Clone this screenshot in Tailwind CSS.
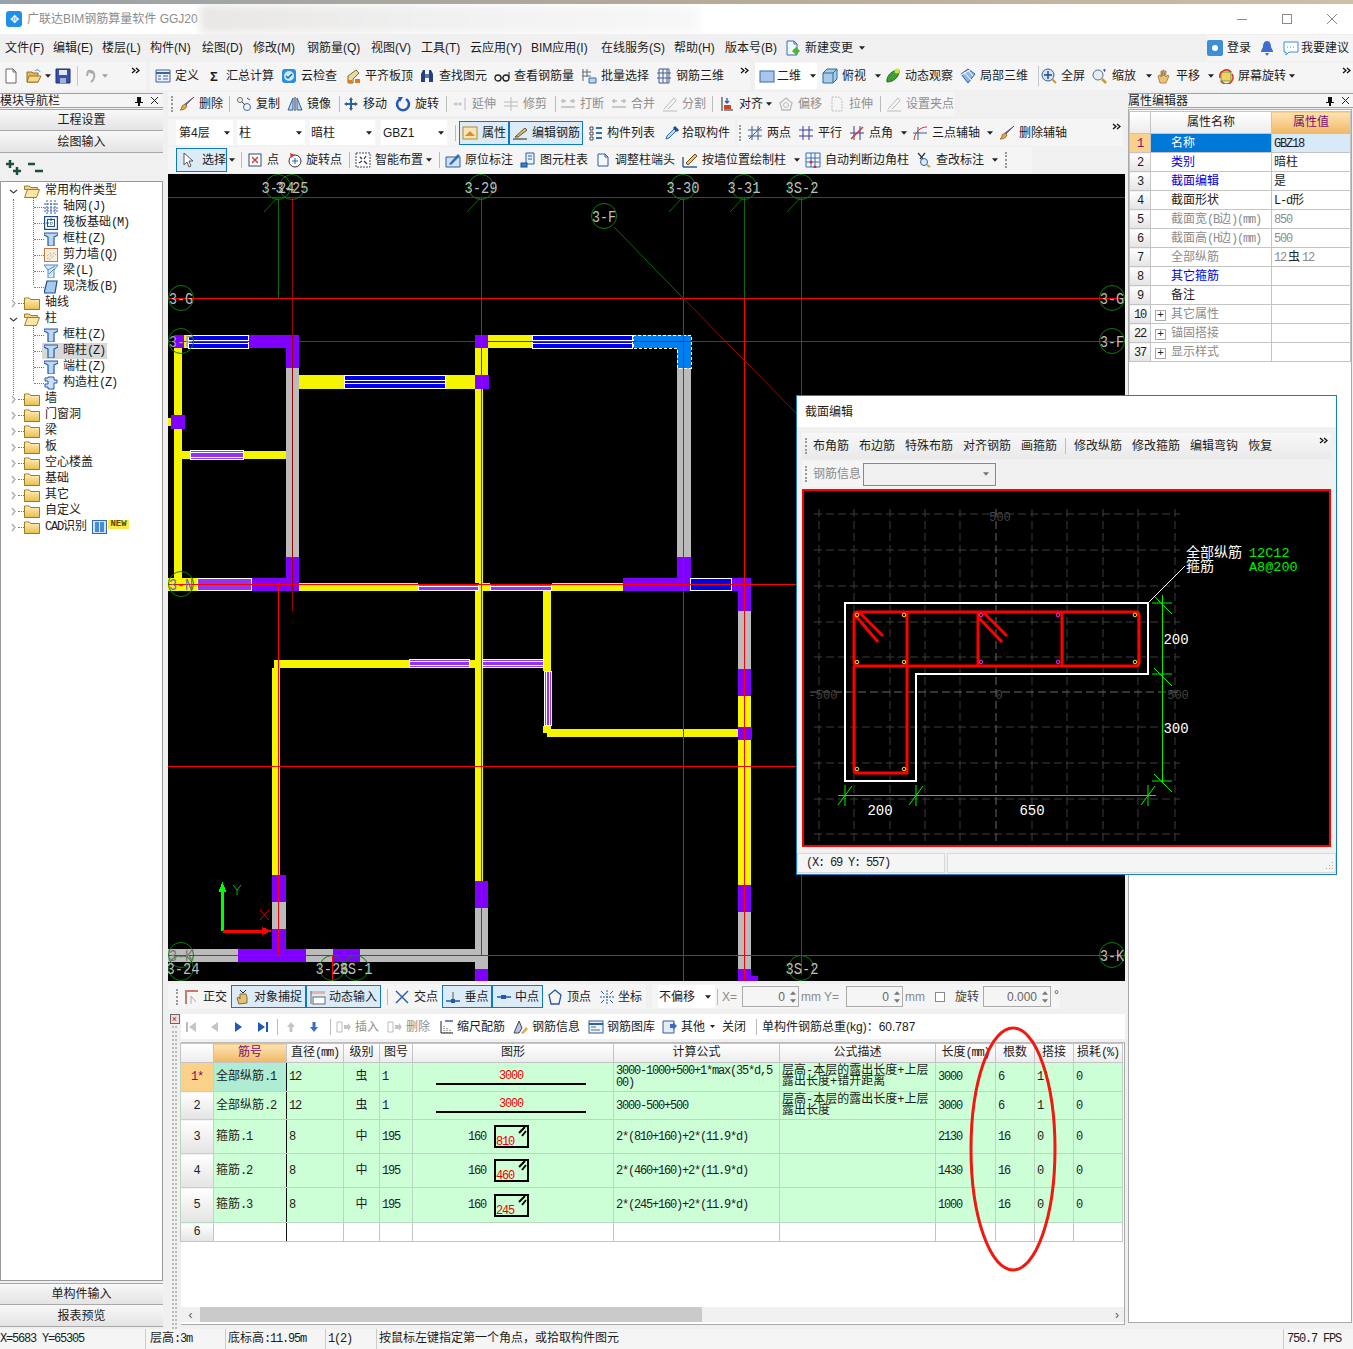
<!DOCTYPE html>
<html lang="zh-CN">
<head>
  <meta charset="UTF-8">
  <title>广联达BIM钢筋算量软件</title>
  <script src="https://cdn.jsdelivr.net/npm/@tailwindcss/browser@4"></script>
</head>
<body class="font-['Liberation_Sans','Noto_Sans_CJK_SC',sans-serif] text-xs leading-none text-[#1c1c1c] bg-[#f0f0f0] whitespace-nowrap">

<!-- shared icons -->
<svg class="absolute w-0 h-0">
  <symbol id="tri" viewBox="0 0 7 4"><path d="M0 0h7L3.500 4z" fill="#222"/></symbol>
  <symbol id="more" viewBox="0 0 9 7"><path d="M1 1l3 2.500L1 6M5 1l3 2.500L5 6" fill="none" stroke="#111" stroke-width="1.300"/></symbol>
  <symbol id="doc" viewBox="0 0 16 16"><path d="M3 1h7l3 3v11H3z" fill="#fff" stroke="#666"/><path d="M10 1v3h3" fill="none" stroke="#666"/></symbol>
  <symbol id="open" viewBox="0 0 16 16"><path d="M1 4h5l1 1h5v9H1z" fill="#e3b85c" stroke="#9a7423"/><path d="M3 8h12l-3 6H1z" fill="#f6d98c" stroke="#9a7423"/><path d="M9 3c2-2 4-1 5 1" fill="none" stroke="#3a7dc4"/></symbol>
  <symbol id="save" viewBox="0 0 16 16"><path d="M1 1h14v14H1z" fill="#3a4fa8" stroke="#1f2f73"/><path d="M4 2h8v5H4z" fill="#dfe6f5"/><path d="M5 10h6v5H5z" fill="#9fb0dc"/></symbol>
  <symbol id="undo" viewBox="0 0 16 16"><path d="M5 3c6-2 9 6 3 11M5 3l-1 5M5 3l5 2" fill="none" stroke="#aaa" stroke-width="2"/></symbol>
  <symbol id="def" viewBox="0 0 16 16"><path d="M1 2h14v12H1z" fill="#e9eff8" stroke="#40639a"/><path d="M1 5h14" stroke="#40639a" stroke-width="2"/><path d="M8 8h5M8 11h5M3 8h3M3 11h3" stroke="#40639a"/></symbol>
  <symbol id="cloud" viewBox="0 0 16 16"><rect x="1" y="1" width="14" height="14" rx="3" fill="#2b8fe0"/><circle cx="8" cy="8" r="5" fill="#cfe8fb"/><path d="M5 8l2 2 4-4" fill="none" stroke="#1668b4" stroke-width="1.500"/></symbol>
  <symbol id="level" viewBox="0 0 16 16"><path d="M3 15V8l8-6 3 3-6 6v4z" fill="#e8d9a6" stroke="#7d6a30"/><path d="M3 15h4v-3H3zM10 15h5v-4h-5z" fill="#e07a1f"/></symbol>
  <symbol id="binoc" viewBox="0 0 16 16"><path d="M2 14V6l2-4h2v12zM14 14V6l-2-4h-2v12z" fill="#23407a"/><path d="M6 6h4v4H6z" fill="#5c78ad"/></symbol>
  <symbol id="glass" viewBox="0 0 16 16"><circle cx="4" cy="10" r="3" fill="none" stroke="#222" stroke-width="1.300"/><circle cx="12" cy="10" r="3" fill="none" stroke="#222" stroke-width="1.300"/><path d="M7 10h2M15 10V4" stroke="#222"/></symbol>
  <symbol id="batch" viewBox="0 0 16 16"><path d="M2 1v12M6 1v8M1 4h9M1 8h9" stroke="#667"/><path d="M8 10h7v5H8z" fill="#bcd3ee" stroke="#3a6cb0"/></symbol>
  <symbol id="grid3" viewBox="0 0 16 16"><path d="M3 1h10v14H3zM1 5h14M1 10h14M7 1v14M11 1v14" fill="none" stroke="#3c5c94"/></symbol>
  <symbol id="two" viewBox="0 0 16 16"><rect x="1" y="3" width="14" height="11" fill="#a9c6ee" stroke="#3c68ac"/></symbol>
  <symbol id="cube" viewBox="0 0 16 16"><path d="M1 5l4-4h10v10l-4 4H1z" fill="#a8cbe8" stroke="#2d6b9f"/><path d="M1 5h10v10M11 5l4-4" fill="none" stroke="#2d6b9f"/></symbol>
  <symbol id="orbit" viewBox="0 0 16 16"><path d="M2 14C1 8 7 2 14 2c1 6-5 12-12 12z" fill="#3fa135" stroke="#23681e"/><circle cx="12" cy="3" r="2.500" fill="#cfe03a"/></symbol>
  <symbol id="local" viewBox="0 0 16 16"><path d="M1 6l7-5 7 5-7 9z" fill="#8fb8e6" stroke="#2f5f9c"/><path d="M4 4l7 8M8 2l5 6M1 7l9-5" stroke="#fff"/></symbol>
  <symbol id="full" viewBox="0 0 16 16"><circle cx="7" cy="7" r="6" fill="#d4e2f5" stroke="#3a5c96"/><path d="M7 3v8M3 7h8" stroke="#26457c" stroke-width="1.400"/><path d="M11 11l4 4" stroke="#c49a3a" stroke-width="2"/></symbol>
  <symbol id="zoom" viewBox="0 0 16 16"><circle cx="6" cy="7" r="5" fill="#e7eef8" stroke="#5a6f8f"/><path d="M10 11l4 4" stroke="#c49a3a" stroke-width="2.500"/><path d="M11 2h3M12.500 1v3" stroke="#3a6cb0"/></symbol>
  <symbol id="pan" viewBox="0 0 16 16"><path d="M4 15L2 8l2-1 1 2V3h1v5l1-6h1v6l1-5h1v6l2-2 1 1-3 7z" fill="#e9c27a" stroke="#8c6a2a" stroke-width=".7"/></symbol>
  <symbol id="srot" viewBox="0 0 16 16"><rect x="3" y="4" width="10" height="9" fill="#f0d35a" stroke="#6aa14a"/><path d="M2 10a6.500 6.500 0 0 1 11-6M14 6a6.500 6.500 0 0 1-11 7" fill="none" stroke="#d6342a" stroke-width="1.500"/></symbol>
  <symbol id="brush" viewBox="0 0 16 16"><path d="M15 1L7 9l-1-1z" fill="#7f6a9e" stroke="#5a4a78" stroke-width=".8"/><path d="M6 8l2 2c-1 3-4 4-7 4 2-1 2-3 2-4z" fill="#e6a94a" stroke="#8a5c1c" stroke-width=".8"/></symbol>
  <symbol id="copy" viewBox="0 0 16 16"><circle cx="4" cy="4" r="2.500" fill="none" stroke="#667"/><circle cx="11" cy="11" r="3.500" fill="none" stroke="#2f6cb0"/><path d="M6 6l3 3M11 2l3 2" stroke="#445"/></symbol>
  <symbol id="mirror" viewBox="0 0 16 16"><path d="M1 14L6 2v12zM15 14L10 2v12z" fill="#bcd3ee" stroke="#2f5f9c"/><path d="M8 1v14" stroke="#334"/></symbol>
  <symbol id="move" viewBox="0 0 16 16"><path d="M8 1l2 3H9v3h3V6l3 2-3 2V9H9v3h1l-2 3-2-3h1V9H4v1L1 8l3-2v1h3V4H6z" fill="#2f5f9c"/></symbol>
  <symbol id="rotate" viewBox="0 0 16 16"><path d="M5 3a6 6 0 1 0 6 0" fill="none" stroke="#2458b8" stroke-width="2.500"/><path d="M8 1L3 1l2 5z" fill="#2458b8"/></symbol>
  <symbol id="extend" viewBox="0 0 16 16"><path d="M1 8h9M13 2v12M4 6v4M8 6v4" stroke="#bbb"/></symbol>
  <symbol id="trim" viewBox="0 0 16 16"><path d="M1 6h14M1 10h14M8 1v14" stroke="#bbb"/></symbol>
  <symbol id="breaks" viewBox="0 0 16 16"><path d="M1 5h5M10 5h5M1 11h14M3 3v4M13 3v4" stroke="#bbb" stroke-width="1.400"/></symbol>
  <symbol id="split" viewBox="0 0 16 16"><path d="M1 15h14M2 13L12 2l2 3-8 8" fill="none" stroke="#bbb"/></symbol>
  <symbol id="align" viewBox="0 0 16 16"><path d="M3 1v14M5 14h9" stroke="#222"/><rect x="5" y="9" width="7" height="4" fill="#c9442f"/><path d="M8 2v5M6 5l2 2 2-2" fill="none" stroke="#2458b8" stroke-width="1.300"/></symbol>
  <symbol id="offset" viewBox="0 0 16 16"><path d="M8 2l6 5-2 7H4L2 7z" fill="none" stroke="#bbb" stroke-width="1.300"/><circle cx="8" cy="9" r="2.500" fill="none" stroke="#bbb"/></symbol>
  <symbol id="stretch" viewBox="0 0 16 16"><path d="M3 1h7l3 3v11H3z" fill="none" stroke="#bbb" stroke-dasharray="2 1"/></symbol>
  <symbol id="prop" viewBox="0 0 16 16"><rect x="1" y="2" width="14" height="12" fill="#f8e6b8" stroke="#b8862a"/><path d="M3 11l5-5 5 5z" fill="#dd8d2c"/></symbol>
  <symbol id="edit" viewBox="0 0 16 16"><path d="M1 14h14" stroke="#222"/><path d="M3 12L13 3l2 2-9 7z" fill="#e4c27a" stroke="#6b4b1a"/></symbol>
  <symbol id="list" viewBox="0 0 16 16"><path d="M2 2h3v3H2zM2 7h3v3H2zM2 12h3v3H2z" fill="#fff" stroke="#445"/><path d="M8 3h6M8 8h6M8 13h6" stroke="#3a6cb0" stroke-width="2"/></symbol>
  <symbol id="pick" viewBox="0 0 16 16"><path d="M2 14l1-3 7-7 2 2-7 7z" fill="#bcd9ee" stroke="#2f6cb0"/><path d="M10 2l4 4" stroke="#1e4e8c" stroke-width="3"/></symbol>
  <symbol id="axis2" viewBox="0 0 16 16"><path d="M5 1v14M11 1v14M1 5h14M1 11h14" stroke="#3a5c96"/><path d="M2 14L14 2" stroke="#d6342a"/></symbol>
  <symbol id="par" viewBox="0 0 16 16"><path d="M5 1v14M11 1v14M1 5h14M1 11h14" stroke="#3a3a96"/></symbol>
  <symbol id="angle" viewBox="0 0 16 16"><path d="M5 1v14M11 1v14M1 8h14" stroke="#3a3a96"/><path d="M2 14L14 2" stroke="#d6342a" stroke-width="1.400"/></symbol>
  <symbol id="three" viewBox="0 0 16 16"><path d="M6 2v13M1 8h14" stroke="#2f5f9c"/><path d="M2 15C3 7 8 2 15 2" fill="none" stroke="#d6342a"/></symbol>
  <symbol id="cursor" viewBox="0 0 16 16"><path d="M5 1v12l3-3 2 5 2-1-2-5h4z" fill="#fff" stroke="#555"/></symbol>
  <symbol id="point" viewBox="0 0 16 16"><rect x="2" y="2" width="12" height="12" fill="#fff" stroke="#334b7c"/><path d="M5 5l6 6M11 5l-6 6" stroke="#d6342a" stroke-width="1.300"/></symbol>
  <symbol id="rotpt" viewBox="0 0 16 16"><circle cx="9" cy="9" r="6" fill="#fff" stroke="#334"/><path d="M9 6v6M6 9h6" stroke="#2458b8"/><path d="M4 1l1 5 4-3z" fill="#d6342a"/></symbol>
  <symbol id="smart" viewBox="0 0 16 16"><rect x="1" y="1" width="14" height="14" fill="#fff" stroke="#445" stroke-dasharray="2 1"/><path d="M5 5l2 2M11 4l-2 3M4 11l3-2M12 12L9 9" stroke="#2a3a5c" stroke-width="1.300"/></symbol>
  <symbol id="mark" viewBox="0 0 16 16"><path d="M1 15h14V5H1z" fill="#cfe0f5" stroke="#2f5f9c"/><path d="M4 12L13 2l2 2-9 9z" fill="#2f6cb0"/></symbol>
  <symbol id="coltable" viewBox="0 0 16 16"><path d="M6 1h8v11H6z" fill="#e9f1fb" stroke="#2f5f9c"/><path d="M8 4h4M8 7h4" stroke="#2f5f9c"/><rect x="1" y="11" width="6" height="4" fill="#3a7dd4" stroke="#1e4e8c"/></symbol>
  <symbol id="adj" viewBox="0 0 16 16"><path d="M3 2h7l3 3v9H3z" fill="#f3f8ff" stroke="#2f5f9c"/><path d="M10 2v3h3" fill="none" stroke="#2f5f9c"/></symbol>
  <symbol id="newchg" viewBox="0 0 16 16"><path d="M2 1h7l3 3v11H2z" fill="#f3f8ff" stroke="#2f6fb5"/><path d="M9 1v3h3" fill="none" stroke="#2f6fb5"/><path d="M11 7l4 4-4 4-4-4z" fill="#4fb23a"/></symbol>
  <symbol id="wall" viewBox="0 0 16 16"><path d="M1 15V5M1 15h14" stroke="#2f5f9c" stroke-width="1.400"/><path d="M4 11L13 2l2 2-9 9z" fill="#e4c27a" stroke="#6b4b1a"/></symbol>
  <symbol id="auto" viewBox="0 0 16 16"><path d="M1 1h14v14H1zM6 1v14M10 1v14M1 6h14M1 10h14" fill="#f5f8fd" stroke="#3a6cb0"/><circle cx="6" cy="10" r="1.500" fill="#d6342a"/><circle cx="10" cy="15" r="1.500" fill="#d6342a"/></symbol>
  <symbol id="check" viewBox="0 0 16 16"><path d="M2 1l7 8M9 1L4 7" stroke="#334" stroke-width="1.200"/><circle cx="8" cy="10" r="3.500" fill="#dceaf8" stroke="#2f5f9c"/><path d="M11 13l3 2" stroke="#c49a3a" stroke-width="2"/></symbol>
  <symbol id="ortho" viewBox="0 0 16 16"><path d="M3 15V2h12" fill="none" stroke="#c87a72" stroke-width="2"/><path d="M8 15V7l5 6" fill="none" stroke="#aaa"/></symbol>
  <symbol id="osnap" viewBox="0 0 16 16"><path d="M4 15l-2-6 2-1 1 2V5h6l1 3v6z" fill="#e3c27c" stroke="#8c6a2a"/><path d="M5 1l3 3M11 1L8 4" stroke="#222"/></symbol>
  <symbol id="dyn" viewBox="0 0 16 16"><path d="M1 2h14v3H1z" fill="#e4b5aa"/><rect x="3" y="8" width="12" height="7" fill="#fff" stroke="#667"/><path d="M1 2v13" stroke="#667"/></symbol>
  <symbol id="cross" viewBox="0 0 16 16"><path d="M2 2l12 12M14 2L2 14" stroke="#2458a8" stroke-width="1.400"/></symbol>
  <symbol id="perp" viewBox="0 0 16 16"><path d="M1 12h14" stroke="#2458a8" stroke-width="1.500"/><path d="M8 3v9" stroke="#555"/><rect x="6" y="10" width="4" height="4" fill="#2458a8"/></symbol>
  <symbol id="mid" viewBox="0 0 16 16"><path d="M1 8h14" stroke="#2458a8" stroke-width="1.500"/><rect x="5" y="6" width="5" height="4" fill="#2458a8"/></symbol>
  <symbol id="vertex" viewBox="0 0 16 16"><path d="M8 1l6 5-2 9H4L2 6z" fill="none" stroke="#2458a8" stroke-width="1.300"/></symbol>
  <symbol id="coord" viewBox="0 0 16 16"><path d="M8 1v14M1 8h14" stroke="#2458a8" stroke-dasharray="2 1"/><path d="M2 2l3 3M14 2l-3 3M2 14l3-3M14 14l-3-3" stroke="#2458a8"/></symbol>
  <symbol id="first" viewBox="0 0 16 16"><path d="M4 3v10" stroke="#bbb" stroke-width="2"/><path d="M13 3v10L6 8z" fill="#c5c5c5"/></symbol>
  <symbol id="prev" viewBox="0 0 16 16"><path d="M11 3v10L4 8z" fill="#c5c5c5"/></symbol>
  <symbol id="next" viewBox="0 0 16 16"><path d="M5 3v10l7-5z" fill="#2458b8"/></symbol>
  <symbol id="last" viewBox="0 0 16 16"><path d="M12 3v10" stroke="#2458b8" stroke-width="2"/><path d="M3 3v10l7-5z" fill="#2458b8"/></symbol>
  <symbol id="up" viewBox="0 0 16 16"><path d="M8 3l4 5H9.500v5h-3V8H4z" fill="#c5c5c5"/></symbol>
  <symbol id="down" viewBox="0 0 16 16"><path d="M8 13L4 8h2.500V3h3v5H12z" fill="#3a6cc4"/></symbol>
  <symbol id="ins" viewBox="0 0 16 16"><path d="M1 3h5v10H1z" fill="none" stroke="#bbb"/><path d="M8 6h4V4l3 4-3 4v-2H8z" fill="#c5c5c5"/></symbol>
  <symbol id="scale" viewBox="0 0 16 16"><path d="M2 14V2M2 14h12" stroke="#222"/><path d="M5 14V6M8 14V8M11 14v-3" stroke="#555" stroke-dasharray="1 1"/><path d="M6 2h8" stroke="#2458b8" stroke-width="1.400"/></symbol>
  <symbol id="info" viewBox="0 0 16 16"><path d="M1 14l5-12 3 7-3 5z" fill="#b7c7dd" stroke="#445"/><path d="M8 14l5-6 2 2-5 5z" fill="#e4a84a"/></symbol>
  <symbol id="lib" viewBox="0 0 16 16"><rect x="1" y="2" width="14" height="12" fill="#eef4fb" stroke="#2f5f9c"/><path d="M1 5h14" stroke="#2f5f9c" stroke-width="2"/><path d="M3 8h5M3 11h9" stroke="#667"/></symbol>
  <symbol id="other" viewBox="0 0 16 16"><path d="M1 2h11v12H1z" fill="#e5edf8" stroke="#2f5f9c"/><path d="M8 5h3V3l4 4-4 4V9H8z" fill="#3a6cc4"/></symbol>
  <symbol id="folder" viewBox="0 0 16 14"><path d="M0.500 2h5l1 1.500h9v10H.5z" fill="url(#fg)" stroke="#a07c28"/></symbol>
  <symbol id="folderopen" viewBox="0 0 16 14"><path d="M.5 2h5l1 1.500h7v2H.5z" fill="#f0d58c" stroke="#a07c28"/><path d="M3.500 5.500h12l-3 8H.5z" fill="#fbe6a6" stroke="#a07c28"/></symbol>
  <linearGradient id="fg" x1="0" y1="0" x2="0" y2="1"><stop offset="0" stop-color="#fdf0bd"/><stop offset="1" stop-color="#e9bd4e"/></linearGradient>
  <symbol id="tgrid" viewBox="0 0 14 14"><path d="M3 0v14M7 0v14M11 0v14M0 4h14M0 8h14M0 11h14" stroke="#3a5ca8" stroke-dasharray="2 1"/></symbol>
  <symbol id="traft" viewBox="0 0 14 14"><rect x=".5" y=".5" width="13" height="13" fill="none" stroke="#1e4e8c" stroke-width="1.400"/><rect x="3.500" y="3.500" width="7" height="7" fill="none" stroke="#1e4e8c"/><path d="M2 7h10M7 2v10" stroke="#1e4e8c" stroke-dasharray="1 1"/></symbol>
  <symbol id="tcol" viewBox="0 0 14 14"><path d="M0 1h14v2l-4 2v9H4V5L0 3z" fill="#bdd6f2" stroke="#2458a8" stroke-width="1.200"/></symbol>
  <symbol id="tshear" viewBox="0 0 14 14"><rect x=".5" y=".5" width="13" height="13" fill="#fbeedd" stroke="#c9743a"/><path d="M3 11l8-7M5 12l7-6M3 8l4-3" stroke="#999" stroke-dasharray="1 1"/></symbol>
  <symbol id="tbeam" viewBox="0 0 14 14"><path d="M0 1h14l-4 5v8H4V6z" fill="#d7eaf7" stroke="#4a8ac4"/><path d="M4 6l7-4M5 10l5-5" stroke="#4a8ac4"/></symbol>
  <symbol id="tslab" viewBox="0 0 14 14"><path d="M3 1h10l-2 12H0z" fill="#a8c9ee" stroke="#1e4e8c" stroke-width="1.200"/></symbol>
  <symbol id="tgz" viewBox="0 0 14 14"><path d="M4 1h6v3h3v3h-3v6H4v-2H1V8h3V5H1V2h3z" fill="#cfe0f5" stroke="#2458a8"/></symbol>
</svg>

<!-- photo behind the window -->
<div class="h-[4px] bg-linear-to-r from-[#9aa3aa] via-[#b4a998] to-[#cdbfa8]"></div>

<!-- title bar -->
<div class="relative h-[30px] bg-white flex items-center overflow-hidden">
  <div class="ml-[6px] w-4 h-4 rounded-[3px] bg-[#1f8fe8] flex items-center justify-center text-white text-[11px]">✥</div>
  <span class="ml-[5px] text-[#8c8c8c] text-[12px]">广联达BIM钢筋算量软件 GGJ20</span>
  <div class="ml-[2px] w-[500px] h-[28px] blur-[4px] bg-linear-to-r from-[#e9e7e5] via-[#f1f1f1] to-[#f8f8f8]"></div>
  <div class="ml-auto flex items-center gap-[35px] pr-[16px]">
    <span class="w-[10px] h-px bg-[#8a8a8a]"></span>
    <span class="w-[10px] h-[10px] border border-[#8a8a8a]"></span>
    <svg class="w-[10px] h-[10px]" viewBox="0 0 10 10"><path d="M0 0l10 10M10 0L0 10" stroke="#8a8a8a"/></svg>
  </div>
</div>

<!-- menu -->
<div class="h-[28px] flex items-center pl-[5px] text-[12px]">
  <span class="w-[48px]">文件(F)</span><span class="w-[49px]">编辑(E)</span><span class="w-[48px]">楼层(L)</span><span class="w-[52px]">构件(N)</span><span class="w-[51px]">绘图(D)</span><span class="w-[54px]">修改(M)</span><span class="w-[64px]">钢筋量(Q)</span><span class="w-[50px]">视图(V)</span><span class="w-[49px]">工具(T)</span><span class="w-[61px]">云应用(Y)</span><span class="w-[70px]">BIM应用(I)</span><span class="w-[73px]">在线服务(S)</span><span class="w-[51px]">帮助(H)</span><span class="w-[60px]">版本号(B)</span>
  <svg class="w-4 h-4 mr-[4px]"><use href="#newchg"/></svg><span>新建变更</span><svg class="w-[6px] h-[4px] ml-[6px]"><use href="#tri"/></svg>
  <div class="ml-auto flex items-center pr-[4px] h-[26px] bg-[#f5f5f5]">
    <span class="w-4 h-4 rounded-[2px] bg-[#3d8fd6] mr-[4px] flex items-center justify-center"><span class="w-[6px] h-[6px] rounded-full bg-white"></span></span><span class="mr-[9px]">登录</span>
    <svg class="w-[14px] h-4 mr-[9px]" viewBox="0 0 14 16"><path d="M7 1c3 0 4 3 4 6l2 4v1H1v-1l2-4c0-3 1-6 4-6zM5 13h4l-2 3z" fill="#3a6fd0"/></svg>
    <svg class="w-4 h-4 mr-[2px]" viewBox="0 0 16 16"><path d="M1 2h14v10H6l-3 3v-3H1z" fill="#fff" stroke="#3d8fd6"/><path d="M4 7h8" stroke="#3d8fd6" stroke-dasharray="1 2"/></svg><span>我要建议</span>
  </div>
</div>

<!-- main toolbar -->
<div class="h-[28px] flex items-center">
  <div class="w-[146px] h-full bg-[#f5f5f5] flex items-center pl-[3px]">
    <svg class="w-4 h-4"><use href="#doc"/></svg>
    <svg class="w-4 h-4 ml-[7px]"><use href="#open"/></svg><svg class="w-[6px] h-[4px] ml-[3px]"><use href="#tri"/></svg>
    <svg class="w-4 h-4 ml-[4px]"><use href="#save"/></svg>
    <span class="w-px h-5 bg-[#c8c8c8] ml-[6px]"></span>
    <svg class="w-4 h-4 ml-[5px]"><use href="#undo"/></svg><svg class="w-[6px] h-[4px] ml-[3px] opacity-40"><use href="#tri"/></svg>
    <svg class="w-[9px] h-[7px] ml-[23px] -mt-3"><use href="#more"/></svg>
  </div>
  <div class="ml-[4px] w-[600px] h-full bg-[#f5f5f5] flex items-center pl-[5px]">
    <div class="flex items-center gap-1 w-[51px]"><svg class="w-4 h-4"><use href="#def"/></svg>定义</div>
    <div class="flex items-center gap-1 w-[75px]"><span class="w-4 text-center text-[13px] font-bold">Σ</span>汇总计算</div>
    <div class="flex items-center gap-1 w-[64px]"><svg class="w-4 h-4"><use href="#cloud"/></svg>云检查</div>
    <div class="flex items-center gap-1 w-[74px]"><svg class="w-4 h-4"><use href="#level"/></svg>平齐板顶</div>
    <div class="flex items-center gap-1 w-[75px]"><svg class="w-4 h-4"><use href="#binoc"/></svg>查找图元</div>
    <div class="flex items-center gap-1 w-[87px]"><svg class="w-4 h-4"><use href="#glass"/></svg>查看钢筋量</div>
    <div class="flex items-center gap-1 w-[75px]"><svg class="w-4 h-4"><use href="#batch"/></svg>批量选择</div>
    <div class="flex items-center gap-1 w-[84px]"><svg class="w-4 h-4"><use href="#grid3"/></svg>钢筋三维</div>
    <svg class="w-[9px] h-[7px] -mt-3"><use href="#more"/></svg>
  </div>
  <div class="ml-[5px] flex-1 h-full bg-[#f5f5f5] flex items-center">
    <div class="flex items-center gap-[2px] w-[62px] h-[26px] pl-[4px] bg-white"><svg class="w-4 h-4"><use href="#two"/></svg>二维<svg class="w-[6px] h-[4px] ml-[7px]"><use href="#tri"/></svg></div>
    <div class="flex items-center gap-1 w-[63px] ml-[5px]"><svg class="w-4 h-4"><use href="#cube"/></svg>俯视<svg class="w-[6px] h-[4px] ml-[5px]"><use href="#tri"/></svg></div>
    <div class="flex items-center gap-1 w-[75px]"><svg class="w-4 h-4"><use href="#orbit"/></svg>动态观察</div>
    <div class="flex items-center gap-1 w-[78px]"><svg class="w-4 h-4"><use href="#local"/></svg>局部三维</div>
    <span class="w-px h-5 bg-[#c8c8c8] mr-[2px]"></span>
    <div class="flex items-center gap-1 w-[51px]"><svg class="w-4 h-4"><use href="#full"/></svg>全屏</div>
    <div class="flex items-center gap-1 w-[64px]"><svg class="w-4 h-4"><use href="#zoom"/></svg>缩放<svg class="w-[6px] h-[4px] ml-[6px]"><use href="#tri"/></svg></div>
    <div class="flex items-center gap-1 w-[62px]"><svg class="w-4 h-4"><use href="#pan"/></svg>平移<svg class="w-[6px] h-[4px] ml-[4px]"><use href="#tri"/></svg></div>
    <div class="flex items-center gap-1"><svg class="w-4 h-4"><use href="#srot"/></svg>屏幕旋转<svg class="w-[6px] h-[4px] -ml-[1px]"><use href="#tri"/></svg></div>
    <svg class="w-[9px] h-[7px] ml-auto mr-[2px] -mt-3"><use href="#more"/></svg>
  </div>
</div>

<!-- work area -->
<div class="flex h-[1239px]">

  <!-- module navigator -->
  <div class="w-[163px] shrink-0 flex flex-col pt-[3px] pb-[2px]">
    <div class="h-[15px] flex items-center justify-between border-t border-b border-[#a0a0a0] bg-[#f5f5f5] pr-[4px] text-[12px]">
      模块导航栏
      <span class="flex items-center gap-[6px]">
        <svg class="w-[10px] h-[10px]" viewBox="0 0 10 10"><path d="M3 1h4v5h2v1H6v3H4V7H1V6h2z" fill="#111"/></svg>
        <svg class="w-[9px] h-[9px]" viewBox="0 0 9 9"><path d="M1 1l7 7M8 1L1 8" stroke="#222"/></svg>
      </span>
    </div>
    <div class="h-[22px] mt-px flex items-center justify-center border-y border-[#a8a8a8] bg-linear-to-b from-[#f8f8f8] to-[#e4e4e4]">工程设置</div>
    <div class="h-[22px] flex items-center justify-center border-b border-[#a8a8a8] bg-linear-to-b from-[#f8f8f8] to-[#e4e4e4]">绘图输入</div>
    <div class="h-[28px] flex items-center pl-[4px]">
      <svg class="w-[40px] h-[17px]" viewBox="0 0 40 17"><path d="M6 1v8M2 5h8M13 8v8M9 12h8M24 5h7M31 12h8" stroke="#1d4e3a" stroke-width="2.500" fill="none"/></svg>
    </div>

    <div class="flex-1 bg-white border border-[#9a9a9a] pt-px text-[12px] font-['Liberation_Mono','Noto_Sans_CJK_SC',monospace]">
      <div class="relative">
        <span class="absolute left-[12px] top-[16px] h-[100px] border-l border-dotted border-[#777]"></span>
        <span class="absolute left-[32px] top-[14px] h-[88px] border-l border-dotted border-[#777]"></span>
        <div class="h-4 flex items-center pl-[8px]"><svg class="w-[9px] h-[9px]" viewBox="0 0 9 9"><path d="M1 3l3.500 3L8 3" fill="none" stroke="#444" stroke-width="1.300"/></svg><span class="w-[6px]"></span><svg class="w-4 h-[14px]"><use href="#folderopen"/></svg><span class="ml-[5px]">常用构件类型</span></div>
        <div class="h-4 flex items-center pl-[33px]"><span class="w-[10px] border-t border-dotted border-[#777]"></span><svg class="w-[14px] h-[14px]"><use href="#tgrid"/></svg><span class="ml-[5px]">轴网<span class="tracking-[-1.2px]">(J)</span></span></div>
        <div class="h-4 flex items-center pl-[33px]"><span class="w-[10px] border-t border-dotted border-[#777]"></span><svg class="w-[14px] h-[14px]"><use href="#traft"/></svg><span class="ml-[5px]">筏板基础<span class="tracking-[-1.2px]">(M)</span></span></div>
        <div class="h-4 flex items-center pl-[33px]"><span class="w-[10px] border-t border-dotted border-[#777]"></span><svg class="w-[14px] h-[14px]"><use href="#tcol"/></svg><span class="ml-[5px]">框柱<span class="tracking-[-1.2px]">(Z)</span></span></div>
        <div class="h-4 flex items-center pl-[33px]"><span class="w-[10px] border-t border-dotted border-[#777]"></span><svg class="w-[14px] h-[14px]"><use href="#tshear"/></svg><span class="ml-[5px]">剪力墙<span class="tracking-[-1.2px]">(Q)</span></span></div>
        <div class="h-4 flex items-center pl-[33px]"><span class="w-[10px] border-t border-dotted border-[#777]"></span><svg class="w-[14px] h-[14px]"><use href="#tbeam"/></svg><span class="ml-[5px]">梁<span class="tracking-[-1.2px]">(L)</span></span></div>
        <div class="h-4 flex items-center pl-[33px]"><span class="w-[10px] border-t border-dotted border-[#777]"></span><svg class="w-[14px] h-[14px]"><use href="#tslab"/></svg><span class="ml-[5px]">现浇板<span class="tracking-[-1.2px]">(B)</span></span></div>
      </div>
      <div class="h-4 flex items-center pl-[8px]"><svg class="w-[9px] h-[9px]" viewBox="0 0 9 9"><path d="M3 1l3 3.500L3 8" fill="none" stroke="#aaa" stroke-width="1.300"/></svg><span class="w-[6px] border-t border-dotted border-[#777]"></span><svg class="w-4 h-[14px]"><use href="#folder"/></svg><span class="ml-[5px]">轴线</span></div>
      <div class="relative">
        <span class="absolute left-[12px] top-[16px] h-[68px] border-l border-dotted border-[#777]"></span>
        <span class="absolute left-[32px] top-[14px] h-[56px] border-l border-dotted border-[#777]"></span>
        <div class="h-4 flex items-center pl-[8px]"><svg class="w-[9px] h-[9px]" viewBox="0 0 9 9"><path d="M1 3l3.500 3L8 3" fill="none" stroke="#444" stroke-width="1.300"/></svg><span class="w-[6px]"></span><svg class="w-4 h-[14px]"><use href="#folderopen"/></svg><span class="ml-[5px]">柱</span></div>
        <div class="h-4 flex items-center pl-[33px]"><span class="w-[10px] border-t border-dotted border-[#777]"></span><svg class="w-[14px] h-[14px]"><use href="#tcol"/></svg><span class="ml-[5px]">框柱<span class="tracking-[-1.2px]">(Z)</span></span></div>
        <div class="h-4 flex items-center pl-[33px]"><span class="w-[8px] border-t border-dotted border-[#777]"></span><span class="flex items-center h-4 pl-[2px] pr-[2px] bg-[#d8d8d8]"><svg class="w-[14px] h-[14px]"><use href="#tcol"/></svg><span class="ml-[5px]">暗柱<span class="tracking-[-1.2px]">(Z)</span></span></span></div>
        <div class="h-4 flex items-center pl-[33px]"><span class="w-[10px] border-t border-dotted border-[#777]"></span><svg class="w-[14px] h-[14px]"><use href="#tcol"/></svg><span class="ml-[5px]">端柱<span class="tracking-[-1.2px]">(Z)</span></span></div>
        <div class="h-4 flex items-center pl-[33px]"><span class="w-[10px] border-t border-dotted border-[#777]"></span><svg class="w-[14px] h-[14px]"><use href="#tgz"/></svg><span class="ml-[5px]">构造柱<span class="tracking-[-1.2px]">(Z)</span></span></div>
      </div>
      <div class="h-4 flex items-center pl-[8px]"><svg class="w-[9px] h-[9px]" viewBox="0 0 9 9"><path d="M3 1l3 3.500L3 8" fill="none" stroke="#aaa" stroke-width="1.300"/></svg><span class="w-[6px] border-t border-dotted border-[#777]"></span><svg class="w-4 h-[14px]"><use href="#folder"/></svg><span class="ml-[5px]">墙</span></div>
      <div class="h-4 flex items-center pl-[8px]"><svg class="w-[9px] h-[9px]" viewBox="0 0 9 9"><path d="M3 1l3 3.500L3 8" fill="none" stroke="#aaa" stroke-width="1.300"/></svg><span class="w-[6px] border-t border-dotted border-[#777]"></span><svg class="w-4 h-[14px]"><use href="#folder"/></svg><span class="ml-[5px]">门窗洞</span></div>
      <div class="h-4 flex items-center pl-[8px]"><svg class="w-[9px] h-[9px]" viewBox="0 0 9 9"><path d="M3 1l3 3.500L3 8" fill="none" stroke="#aaa" stroke-width="1.300"/></svg><span class="w-[6px] border-t border-dotted border-[#777]"></span><svg class="w-4 h-[14px]"><use href="#folder"/></svg><span class="ml-[5px]">梁</span></div>
      <div class="h-4 flex items-center pl-[8px]"><svg class="w-[9px] h-[9px]" viewBox="0 0 9 9"><path d="M3 1l3 3.500L3 8" fill="none" stroke="#aaa" stroke-width="1.300"/></svg><span class="w-[6px] border-t border-dotted border-[#777]"></span><svg class="w-4 h-[14px]"><use href="#folder"/></svg><span class="ml-[5px]">板</span></div>
      <div class="h-4 flex items-center pl-[8px]"><svg class="w-[9px] h-[9px]" viewBox="0 0 9 9"><path d="M3 1l3 3.500L3 8" fill="none" stroke="#aaa" stroke-width="1.300"/></svg><span class="w-[6px] border-t border-dotted border-[#777]"></span><svg class="w-4 h-[14px]"><use href="#folder"/></svg><span class="ml-[5px]">空心楼盖</span></div>
      <div class="h-4 flex items-center pl-[8px]"><svg class="w-[9px] h-[9px]" viewBox="0 0 9 9"><path d="M3 1l3 3.500L3 8" fill="none" stroke="#aaa" stroke-width="1.300"/></svg><span class="w-[6px] border-t border-dotted border-[#777]"></span><svg class="w-4 h-[14px]"><use href="#folder"/></svg><span class="ml-[5px]">基础</span></div>
      <div class="h-4 flex items-center pl-[8px]"><svg class="w-[9px] h-[9px]" viewBox="0 0 9 9"><path d="M3 1l3 3.500L3 8" fill="none" stroke="#aaa" stroke-width="1.300"/></svg><span class="w-[6px] border-t border-dotted border-[#777]"></span><svg class="w-4 h-[14px]"><use href="#folder"/></svg><span class="ml-[5px]">其它</span></div>
      <div class="h-4 flex items-center pl-[8px]"><svg class="w-[9px] h-[9px]" viewBox="0 0 9 9"><path d="M3 1l3 3.500L3 8" fill="none" stroke="#aaa" stroke-width="1.300"/></svg><span class="w-[6px] border-t border-dotted border-[#777]"></span><svg class="w-4 h-[14px]"><use href="#folder"/></svg><span class="ml-[5px]">自定义</span></div>
      <div class="h-4 flex items-center pl-[8px]"><svg class="w-[9px] h-[9px]" viewBox="0 0 9 9"><path d="M3 1l3 3.500L3 8" fill="none" stroke="#aaa" stroke-width="1.300"/></svg><span class="w-[6px] border-t border-dotted border-[#777]"></span><svg class="w-4 h-[14px]"><use href="#folder"/></svg><span class="ml-[5px] tracking-[-1.2px]">CAD</span><span>识别</span>
        <span class="ml-[5px] w-[15px] h-[14px] border border-[#2f6cb0] bg-[#cfe3f7] flex justify-center gap-px py-px"><span class="w-[4px] bg-[#4a8ad4]"></span><span class="w-[4px] bg-[#4a8ad4]"></span></span><span class="-mt-[6px] ml-px w-[21px] h-[9px] flex items-center justify-center bg-[#ffe94a] text-[9px] font-bold text-[#5a4a00]">NEW</span></div>
    </div>

    <div class="h-[22px] mt-[2px] flex items-center justify-center border-y border-[#a8a8a8] bg-linear-to-b from-[#f8f8f8] to-[#e4e4e4]">单构件输入</div>
    <div class="h-[22px] flex items-center justify-center border-b border-[#a8a8a8] bg-linear-to-b from-[#f8f8f8] to-[#e4e4e4]">报表预览</div>
  </div>

  <!-- centre column -->
  <div class="w-[957px] ml-[5px] shrink-0 flex flex-col pt-[2px]">

    <!-- edit toolbar -->
    <div class="h-[24px] w-[787px] bg-[#f5f5f5] flex items-center pl-[3px]">
      <span class="w-[3px] h-4 mr-[5px] border-l-2 border-dotted border-[#999]"></span>
      <div class="flex items-center gap-1 w-[50px]"><svg class="w-4 h-4"><use href="#brush"/></svg>删除</div>
      <span class="w-px h-4 bg-[#bbb] mr-[6px]"></span>
      <div class="flex items-center gap-1 w-[51px]"><svg class="w-4 h-4"><use href="#copy"/></svg>复制</div>
      <div class="flex items-center gap-1 w-[52px]"><svg class="w-4 h-4"><use href="#mirror"/></svg>镜像</div>
      <span class="w-px h-4 bg-[#bbb] mr-[3px]"></span>
      <div class="flex items-center gap-1 w-[52px]"><svg class="w-4 h-4"><use href="#move"/></svg>移动</div>
      <div class="flex items-center gap-1 w-[51px]"><svg class="w-4 h-4"><use href="#rotate"/></svg>旋转</div>
      <span class="w-px h-4 bg-[#bbb] mr-[5px]"></span>
      <div class="flex items-center gap-1 w-[51px] text-[#8f8f8f]"><svg class="w-4 h-4"><use href="#extend"/></svg>延伸</div>
      <div class="flex items-center gap-1 w-[52px] text-[#8f8f8f]"><svg class="w-4 h-4"><use href="#trim"/></svg>修剪</div>
      <span class="w-px h-4 bg-[#bbb] mr-[4px]"></span>
      <div class="flex items-center gap-1 w-[51px] text-[#8f8f8f]"><svg class="w-4 h-4"><use href="#breaks"/></svg>打断</div>
      <div class="flex items-center gap-1 w-[51px] text-[#8f8f8f]"><svg class="w-4 h-4"><use href="#breaks"/></svg>合并</div>
      <div class="flex items-center gap-1 w-[50px] text-[#8f8f8f]"><svg class="w-4 h-4"><use href="#split"/></svg>分割</div>
      <span class="w-px h-4 bg-[#bbb] mr-[6px]"></span>
      <div class="flex items-center gap-1 w-[59px]"><svg class="w-4 h-4"><use href="#align"/></svg>对齐<svg class="w-[6px] h-[4px] -ml-[1px]"><use href="#tri"/></svg></div>
      <div class="flex items-center gap-1 w-[51px] text-[#8f8f8f]"><svg class="w-4 h-4"><use href="#offset"/></svg>偏移</div>
      <div class="flex items-center gap-1 w-[51px] text-[#8f8f8f]"><svg class="w-4 h-4"><use href="#stretch"/></svg>拉伸</div>
      <span class="w-px h-4 bg-[#bbb] mr-[5px]"></span>
      <div class="flex items-center gap-1 text-[#8f8f8f]"><svg class="w-4 h-4"><use href="#split"/></svg>设置夹点</div>
    </div>

    <!-- component toolbar -->
    <div class="h-[27px] mt-[3px] flex">
      <div class="w-[567px] bg-[#f5f5f5] flex items-center pl-[8px]">
        <div class="w-[57px] h-[25px] bg-white flex items-center justify-between px-[3px]">第4层<svg class="w-[6px] h-[4px]"><use href="#tri"/></svg></div>
        <div class="w-[68px] ml-[4px] h-[25px] bg-white flex items-center justify-between px-[2px] pr-[3px]">柱<svg class="w-[6px] h-[4px]"><use href="#tri"/></svg></div>
        <div class="w-[65px] ml-[5px] h-[25px] bg-white flex items-center justify-between px-[1px] pr-[3px]">暗柱<svg class="w-[6px] h-[4px]"><use href="#tri"/></svg></div>
        <div class="w-[66px] ml-[6px] h-[25px] bg-white flex items-center justify-between px-[2px] pr-[3px]">GBZ1<svg class="w-[6px] h-[4px]"><use href="#tri"/></svg></div>
        <span class="w-px h-4 ml-[8px] bg-[#bbb]"></span>
        <div class="w-[50px] h-[24px] ml-[3px] border border-[#0d79c8] bg-[#dcebf8] flex items-center justify-center gap-1"><svg class="w-4 h-4"><use href="#prop"/></svg>属性</div>
        <div class="w-[74px] h-[24px] border border-[#0d79c8] bg-[#dcebf8] flex items-center justify-center gap-1"><svg class="w-4 h-4"><use href="#edit"/></svg>编辑钢筋</div>
        <div class="flex items-center gap-[3px] w-[76px] ml-[5px]"><svg class="w-4 h-4"><use href="#list"/></svg>构件列表</div>
        <div class="flex items-center gap-[2px]"><svg class="w-4 h-4"><use href="#pick"/></svg>拾取构件</div>
      </div>
      <div class="flex-1 ml-[3px] mr-[2px] bg-[#f5f5f5] flex items-center pl-[1px]">
        <span class="w-[3px] h-4 mr-[5px] border-l-2 border-dotted border-[#999]"></span>
        <div class="flex items-center gap-1 w-[51px]"><svg class="w-4 h-4"><use href="#axis2"/></svg>两点</div>
        <div class="flex items-center gap-1 w-[51px]"><svg class="w-4 h-4"><use href="#par"/></svg>平行</div>
        <div class="flex items-center gap-1 w-[63px]"><svg class="w-4 h-4"><use href="#angle"/></svg>点角<svg class="w-[6px] h-[4px] ml-[4px]"><use href="#tri"/></svg></div>
        <div class="flex items-center gap-1 w-[87px]"><svg class="w-4 h-4"><use href="#three"/></svg>三点辅轴<svg class="w-[6px] h-[4px] ml-[3px]"><use href="#tri"/></svg></div>
        <div class="flex items-center gap-1"><svg class="w-4 h-4"><use href="#brush"/></svg>删除辅轴</div>
        <svg class="w-[9px] h-[7px] ml-auto mr-[2px] -mt-3"><use href="#more"/></svg>
      </div>
    </div>

    <!-- draw toolbar -->
    <div class="h-[26px] w-[864px] mt-px bg-[#f5f5f5] flex items-center pl-[4px]">
      <div class="w-[51px] h-[24px] ml-[4px] border border-[#0d79c8] bg-[#dcebf8] flex items-center pl-[2px] gap-[7px]"><svg class="w-4 h-4"><use href="#cursor"/></svg>选择</div>
      <svg class="w-[6px] h-[4px] ml-[2px]"><use href="#tri"/></svg>
      <span class="w-px h-4 ml-[6px] bg-[#bbb]"></span>
      <div class="flex items-center gap-1 w-[39px] ml-[5px]"><svg class="w-4 h-4"><use href="#point"/></svg>点</div>
      <div class="flex items-center gap-1 w-[63px]"><svg class="w-4 h-4"><use href="#rotpt"/></svg>旋转点</div>
      <span class="w-px h-4 bg-[#bbb]"></span>
      <div class="flex items-center gap-1 w-[84px] ml-[5px]"><svg class="w-4 h-4"><use href="#smart"/></svg>智能布置<svg class="w-[6px] h-[4px] -ml-[1px]"><use href="#tri"/></svg></div>
      <span class="w-px h-4 bg-[#bbb]"></span>
      <div class="flex items-center gap-1 w-[75px] ml-[5px]"><svg class="w-4 h-4"><use href="#mark"/></svg>原位标注</div>
      <div class="flex items-center gap-1 w-[75px]"><svg class="w-4 h-4"><use href="#coltable"/></svg>图元柱表</div>
      <div class="flex items-center gap-1 w-[87px]"><svg class="w-4 h-4"><use href="#adj"/></svg>调整柱端头</div>
      <div class="flex items-center gap-1 w-[123px]"><svg class="w-4 h-4"><use href="#wall"/></svg>按墙位置绘制柱<svg class="w-[6px] h-[4px] ml-[4px]"><use href="#tri"/></svg></div>
      <div class="flex items-center gap-1 w-[111px]"><svg class="w-4 h-4"><use href="#auto"/></svg>自动判断边角柱</div>
      <div class="flex items-center gap-1 w-[89px]"><svg class="w-4 h-4"><use href="#check"/></svg>查改标注<svg class="w-[6px] h-[4px] ml-[4px]"><use href="#tri"/></svg></div>
      <span class="w-[3px] h-4 border-l-2 border-dotted border-[#999]"></span>
    </div>

    <!-- drawing canvas -->
    <svg class="block w-[957px] h-[807px] bg-black shrink-0 mt-px" viewBox="168 174 957 807" font-family="Liberation Mono" shape-rendering="crispEdges">
      <g fill="#f5f500">
        <rect x="174" y="348" width="8" height="236"/><rect x="168" y="578" width="29" height="13"/><rect x="184" y="335" width="4" height="13"/>
        <rect x="293" y="375" width="182" height="14"/><rect x="475" y="348" width="13" height="27"/><rect x="475" y="389" width="8" height="194"/>
        <rect x="488" y="335" width="44" height="13"/><rect x="182" y="451" width="110" height="8"/><rect x="168" y="418" width="3" height="8"/>
        <rect x="299" y="583" width="119" height="8"/><rect x="479" y="583" width="11" height="8"/><rect x="552" y="583" width="71" height="8"/>
        <rect x="475" y="591" width="8" height="290"/><rect x="543" y="591" width="8" height="80"/><rect x="543" y="726" width="8" height="7"/><rect x="547" y="729" width="191" height="8"/>
        <rect x="274" y="660" width="135" height="8"/><rect x="470" y="660" width="13" height="8"/><rect x="272" y="668" width="8" height="207"/>
        <rect x="738" y="696" width="13" height="31"/><rect x="738" y="740" width="13" height="145"/>
      </g>
      <g fill="#bbbbbb">
        <rect x="286" y="368" width="13" height="189"/><rect x="677" y="368" width="14" height="189"/><rect x="738" y="611" width="13" height="58"/>
        <rect x="738" y="912" width="13" height="57"/><rect x="272" y="902" width="14" height="27"/><rect x="475" y="908" width="13" height="61"/>
        <rect x="168" y="949" width="70" height="13"/><rect x="306" y="949" width="27" height="13"/><rect x="360" y="949" width="128" height="13"/>
      </g>
      <g fill="#7f00ff">
        <rect x="174" y="335" width="10" height="13"/>
        <rect x="249" y="335" width="50" height="13"/><rect x="286" y="348" width="13" height="20"/><rect x="286" y="557" width="13" height="34"/><rect x="252" y="578" width="47" height="13"/>
        <rect x="475" y="335" width="13" height="13"/><rect x="475" y="375" width="14" height="14"/><rect x="171" y="415" width="14" height="14"/>
        <rect x="623" y="578" width="67" height="13"/><rect x="677" y="557" width="14" height="21"/><rect x="732" y="578" width="19" height="13"/><rect x="738" y="591" width="13" height="20"/>
        <rect x="738" y="669" width="13" height="27"/><rect x="738" y="727" width="14" height="13"/><rect x="738" y="885" width="13" height="27"/><rect x="738" y="969" width="13" height="12"/><rect x="751" y="976" width="7" height="5"/>
        <rect x="272" y="875" width="14" height="27"/><rect x="272" y="929" width="14" height="20"/><rect x="475" y="881" width="13" height="27"/><rect x="475" y="969" width="13" height="12"/>
        <rect x="238" y="949" width="68" height="13"/><rect x="333" y="949" width="27" height="13"/>
      </g>
      <path d="M633 335H691V368H677V348H633Z" fill="#0080f0" stroke="#fff" stroke-dasharray="3 2"/>
      <!-- blue beams -->
      <g fill="#0000e6" stroke="#fff">
        <rect x="188.500" y="335.500" width="60" height="13"/><path d="M188 340.500H249M188 343.500H249"/>
        <rect x="344.500" y="375.500" width="101" height="13"/><path d="M344 380.500H446M344 383.500H446"/>
        <rect x="532.500" y="335.500" width="100" height="13"/><path d="M532 340.500H633M532 343.500H633"/>
        <rect x="690.500" y="578.500" width="41" height="12"/><path d="M690 584.500H732"/>
      </g>
      <!-- purple beams -->
      <g fill="#9433f0" stroke="#fff">
        <rect x="190.500" y="450.500" width="53" height="9"/><path d="M190 452.500H244M190 457.500H244"/>
        <rect x="197.500" y="578.500" width="54" height="12"/><path d="M197 584.500H252"/>
        <rect x="418.500" y="584.500" width="60" height="6"/><path d="M418 586.500H479"/>
        <rect x="490.500" y="584.500" width="61" height="6"/><path d="M490 586.500H552"/>
        <rect x="409.500" y="659.500" width="60" height="8"/><path d="M409 661.500H470M409 665.500H470"/>
        <rect x="482.500" y="659.500" width="61" height="8"/><path d="M482 661.500H544M482 665.500H544"/>
        <rect x="544.500" y="671.500" width="7" height="54"/><path d="M546.500 671V726M549.500 671V726"/>
      </g>
      <!-- axis lines -->
      <g stroke="#0a6a0a" fill="none">
        <path d="M168 197.500H1125M278.500 197V298M481.500 197V298M683.500 197V298M744.500 197V298M801.500 197V975"/>
        <path d="M278 197l-14 15M481 197l-14 15M683 197l-14 15M744 197l-14 15M801 197l-14 15" shape-rendering="auto"/>
        <path d="M614 227L683 298" shape-rendering="auto"/>
      </g>
      <g stroke="#ff0000" fill="none">
        <path d="M168 298.500H1125M168 584.500H1125M168 766.500H1125M168 955.500H1125"/>
        <path d="M168 341.500H1125" stroke="#d80000"/>
        <path d="M278.500 584V955M481.500 298V955M683.500 298V981M744.500 298V981M332.500 955V981"/>
        <path d="M292.500 197V611" stroke="#a00000"/>
        <path d="M683 298L797 414" stroke="#a00000" shape-rendering="auto"/>
      </g>
      <!-- axis bubbles -->
      <g fill="none" stroke="#0f7a0f" shape-rendering="auto">
        <circle cx="278" cy="187" r="12.500"/><circle cx="292" cy="187" r="12.500"/><circle cx="481" cy="187" r="12.500"/><circle cx="683" cy="187" r="12.500"/><circle cx="744" cy="187" r="12.500"/><circle cx="801" cy="187" r="12.500"/>
        <circle cx="604" cy="216" r="12.500"/><circle cx="181" cy="298" r="12.500"/><circle cx="181" cy="341" r="12.500"/><circle cx="181" cy="584" r="12.500"/><circle cx="181" cy="955" r="12.500"/><circle cx="181" cy="968" r="12.500"/>
        <circle cx="332" cy="968" r="12.500"/><circle cx="356" cy="968" r="12.500"/><circle cx="1112" cy="298" r="12.500"/><circle cx="1112" cy="341" r="12.500"/><circle cx="1112" cy="955" r="12.500"/><circle cx="801" cy="968" r="12.500"/>
      </g>
      <g fill="#bdbdbd" font-size="16" text-anchor="middle" shape-rendering="auto">
        <text x="278" y="193" textLength="33" lengthAdjust="spacingAndGlyphs">3-24</text><text x="292" y="193" textLength="33" lengthAdjust="spacingAndGlyphs">3-25</text>
        <text x="481" y="193" textLength="33" lengthAdjust="spacingAndGlyphs">3-29</text><text x="683" y="193" textLength="33" lengthAdjust="spacingAndGlyphs">3-30</text>
        <text x="744" y="193" textLength="33" lengthAdjust="spacingAndGlyphs">3-31</text><text x="802" y="193" textLength="33" lengthAdjust="spacingAndGlyphs">3S-2</text>
        <text x="604" y="222" textLength="24" lengthAdjust="spacingAndGlyphs">3-F</text><text x="181" y="304" textLength="24" lengthAdjust="spacingAndGlyphs">3-G</text>
        <text x="181" y="347" textLength="24" lengthAdjust="spacingAndGlyphs" fill="#9a9a9a">3-F</text><text x="181" y="590" textLength="24" lengthAdjust="spacingAndGlyphs" fill="#5a6fb0">3-N</text>
        <text x="181" y="961" textLength="24" lengthAdjust="spacingAndGlyphs" fill="#777">3-K</text><text x="183" y="974" textLength="33" lengthAdjust="spacingAndGlyphs">3-24</text>
        <text x="332" y="974" textLength="33" lengthAdjust="spacingAndGlyphs">3-26</text><text x="356" y="974" textLength="33" lengthAdjust="spacingAndGlyphs">3S-1</text>
        <text x="1112" y="304" textLength="24" lengthAdjust="spacingAndGlyphs">3-G</text><text x="1112" y="347" textLength="24" lengthAdjust="spacingAndGlyphs">3-F</text><text x="1112" y="961" textLength="24" lengthAdjust="spacingAndGlyphs">3-K</text>
        <text x="802" y="974" textLength="33" lengthAdjust="spacingAndGlyphs">3S-2</text>
      </g>
      <!-- ucs -->
      <path d="M222.500 931V888" stroke="#00ff00" stroke-width="3"/><path d="M222.500 882l4 10h-8z" fill="#00ff00"/>
      <path d="M223 931H262" stroke="#ff0000" stroke-width="3"/><path d="M272 931l-10-4v8z" fill="#ff0000"/>
      <path d="M233 885l4 5 4-5M237 890v5" stroke="#00c000" fill="none" shape-rendering="auto"/>
      <path d="M260 910l9 10M269 910l-9 10" stroke="#e00000" shape-rendering="auto"/>
    </svg>

    <!-- snap toolbar -->
    <div class="h-[31px] flex items-center">
      <div class="w-[478px] h-[25px] bg-[#f5f5f5] flex items-center pl-[8px]">
        <span class="w-[3px] h-4 mr-[4px] border-l-2 border-dotted border-[#999]"></span>
        <div class="flex items-center gap-1 w-[48px]"><svg class="w-4 h-4"><use href="#ortho"/></svg>正交</div>
        <div class="w-[75px] h-[23px] border border-[#0d79c8] bg-[#dcebf8] flex items-center justify-center gap-[3px]"><svg class="w-4 h-4"><use href="#osnap"/></svg>对象捕捉</div>
        <div class="w-[75px] h-[23px] border border-[#0d79c8] bg-[#dcebf8] flex items-center justify-center gap-[3px]"><svg class="w-4 h-4"><use href="#dyn"/></svg>动态输入</div>
        <span class="w-px h-4 ml-[6px] bg-[#bbb]"></span>
        <div class="flex items-center gap-1 w-[48px] ml-[6px]"><svg class="w-4 h-4"><use href="#cross"/></svg>交点</div>
        <div class="w-[50px] h-[23px] border border-[#0d79c8] bg-[#dcebf8] flex items-center justify-center gap-[3px]"><svg class="w-4 h-4"><use href="#perp"/></svg>垂点</div>
        <div class="w-[51px] h-[23px] border border-[#0d79c8] bg-[#dcebf8] flex items-center justify-center gap-[3px]"><svg class="w-4 h-4"><use href="#mid"/></svg>中点</div>
        <div class="flex items-center gap-1 w-[52px] ml-[4px]"><svg class="w-4 h-4"><use href="#vertex"/></svg>顶点</div>
        <div class="flex items-center gap-[3px]"><svg class="w-4 h-4"><use href="#coord"/></svg>坐标</div>
      </div>
      <div class="ml-[6px] w-[408px] h-[25px] bg-[#f5f5f5] flex items-center">
        <div class="ml-[6px] w-[57px] h-[23px] bg-white flex items-center justify-between px-px pr-[4px]">不偏移<svg class="w-[6px] h-[4px]"><use href="#tri"/></svg></div>
        <span class="w-px h-4 ml-[2px] bg-[#bbb]"></span>
        <span class="ml-[4px] w-[20px] text-[#8a8a8a]">X=</span>
        <div class="w-[57px] h-[21px] border border-[#aaa] bg-[#f5f5f5] flex items-center justify-end pr-[2px] text-[#666] gap-[5px]">0<span class="flex flex-col gap-[4px]"><svg class="w-[6px] h-[4px] rotate-180 opacity-60"><use href="#tri"/></svg><svg class="w-[6px] h-[4px] opacity-60"><use href="#tri"/></svg></span></div>
        <span class="ml-[2px] w-[23px] text-[#8a8a8a]">mm</span><span class="w-[22px] text-[#8a8a8a]">Y=</span>
        <div class="w-[57px] h-[21px] border border-[#aaa] bg-[#f5f5f5] flex items-center justify-end pr-[2px] text-[#666] gap-[5px]">0<span class="flex flex-col gap-[4px]"><svg class="w-[6px] h-[4px] rotate-180 opacity-60"><use href="#tri"/></svg><svg class="w-[6px] h-[4px] opacity-60"><use href="#tri"/></svg></span></div>
        <span class="ml-[2px] w-[30px] text-[#8a8a8a]">mm</span>
        <span class="w-[10px] h-[10px] border border-[#888] bg-white"></span>
        <span class="ml-[10px] w-[28px] text-[#444]">旋转</span>
        <div class="w-[68px] h-[21px] border border-[#aaa] bg-[#f5f5f5] flex items-center justify-end pr-[2px] text-[#666] gap-[5px]">0.000<span class="flex flex-col gap-[4px]"><svg class="w-[6px] h-[4px] rotate-180 opacity-60"><use href="#tri"/></svg><svg class="w-[6px] h-[4px] opacity-60"><use href="#tri"/></svg></span></div>
        <span class="ml-[3px] text-[#444] -mt-1">°</span>
      </div>
    </div>

    <!-- rebar panel -->
    <div class="flex-1 flex">
      <div class="w-[13px] flex flex-col items-center pt-[2px]">
        <span class="w-[10px] h-[10px] border border-[#666] bg-[#f3dcdc] flex items-center justify-center text-[9px] text-[#b22222]">×</span>
        <span class="mt-[2px] flex-1 w-[5px] border-x-2 border-dotted border-[#bbb]"></span>
      </div>
      <div class="flex-1 flex flex-col">
        <div class="h-[25px] mt-[2px] bg-white flex items-center pl-[2px]">
          <svg class="w-4 h-4"><use href="#first"/></svg>
          <svg class="w-4 h-4 ml-[8px]"><use href="#prev"/></svg>
          <svg class="w-4 h-4 ml-[7px]"><use href="#next"/></svg>
          <svg class="w-4 h-4 ml-[9px]"><use href="#last"/></svg>
          <span class="w-px h-4 ml-[6px] bg-[#bbb]"></span>
          <svg class="w-4 h-4 ml-[5px]"><use href="#up"/></svg>
          <svg class="w-4 h-4 ml-[7px]"><use href="#down"/></svg>
          <span class="w-px h-4 ml-[8px] bg-[#bbb]"></span>
          <div class="flex items-center gap-[3px] w-[51px] ml-[5px] text-[#8f8f8f]"><svg class="w-4 h-4"><use href="#ins"/></svg>插入</div>
          <div class="flex items-center gap-[3px] w-[52px] text-[#8f8f8f]"><svg class="w-4 h-4"><use href="#ins"/></svg>删除</div>
          <div class="flex items-center gap-[2px] w-[74px]"><svg class="w-4 h-4"><use href="#scale"/></svg>缩尺配筋</div>
          <div class="flex items-center gap-[3px] w-[75px]"><svg class="w-4 h-4"><use href="#info"/></svg>钢筋信息</div>
          <div class="flex items-center gap-[3px] w-[74px]"><svg class="w-4 h-4"><use href="#lib"/></svg>钢筋图库</div>
          <div class="flex items-center gap-[3px] w-[60px]"><svg class="w-4 h-4"><use href="#other"/></svg>其他<svg class="w-[5px] h-[3px] ml-[2px]"><use href="#tri"/></svg></div>
          <span class="w-[34px]">关闭</span>
          <span class="w-px h-4 bg-[#bbb]"></span>
          <span class="ml-[5px]">单构件钢筋总重(kg)：60.787</span>
        </div>

        <div class="relative flex-1 mt-[3px] mb-[4px] bg-white border-r border-b border-[#aaa] border-t border-t-[#bbb] flex flex-col justify-between">
          <table class="w-[942px] -ml-px table-fixed border-collapse font-['Liberation_Mono','Noto_Sans_CJK_SC',monospace] text-[12px] leading-[12px]">
            <colgroup>
              <col class="w-[33px]"><col class="w-[73px]"><col class="w-[57px]"><col class="w-[36px]"><col class="w-[33px]"><col class="w-[201px]"><col class="w-[166px]"><col class="w-[156px]"><col class="w-[60px]"><col class="w-[39px]"><col class="w-[39px]"><col class="w-[49px]">
            </colgroup>
            <thead>
              <tr class="h-[19px] bg-linear-to-b from-white to-[#ececec]">
                <th class="border border-[#c4c4c4] font-normal"></th>
                <th class="border border-[#c4c4c4] font-normal text-[#7a0f6f] bg-linear-to-b from-[#fde3b4] to-[#f0b863]">筋号</th>
                <th class="border border-[#c4c4c4] font-normal">直径<span class="tracking-[-1.2px]">(mm)</span></th>
                <th class="border border-[#c4c4c4] font-normal">级别</th>
                <th class="border border-[#c4c4c4] font-normal">图号</th>
                <th class="border border-[#c4c4c4] font-normal">图形</th>
                <th class="border border-[#c4c4c4] font-normal">计算公式</th>
                <th class="border border-[#c4c4c4] font-normal">公式描述</th>
                <th class="border border-[#c4c4c4] font-normal">长度<span class="tracking-[-1.2px]">(mm)</span></th>
                <th class="border border-[#c4c4c4] font-normal">根数</th>
                <th class="border border-[#c4c4c4] font-normal">搭接</th>
                <th class="border border-[#c4c4c4] font-normal overflow-hidden">损耗<span class="tracking-[-1.2px]">(%)</span></th>
              </tr>
            </thead>
            <tbody class="bg-[#ccffd6]">
              <tr class="h-[29px]">
                <td class="border border-[#b8d8bf] text-center text-[#7a0f6f] bg-[#fbd089] tracking-[-1.2px]">1*</td>
                <td class="border border-[#b8d8bf] border-r-[#111] bg-[#aeecd4] px-[2px]">全部纵筋<span class="tracking-[-1.2px]">.1</span></td>
                <td class="border border-[#b8d8bf] border-l-[#111] px-[2px] tracking-[-1.2px]">12</td>
                <td class="border border-[#b8d8bf] text-center">虫</td>
                <td class="border border-[#b8d8bf] px-[2px] tracking-[-1.2px]">1</td>
                <td class="border border-[#b8d8bf]"><div class="ml-[23px] w-[150px] border-b-2 border-black text-center text-[#f00000] tracking-[-1.2px] pb-px">3000</div></td>
                <td class="border border-[#b8d8bf] px-[2px] tracking-[-1.2px] whitespace-normal break-all">3000-1000+500+1*max(35*d,500)</td>
                <td class="border border-[#b8d8bf] px-[2px] leading-[11px] whitespace-normal">层高-本层的露出长度+上层露出长度+错开距离</td>
                <td class="border border-[#b8d8bf] px-[2px] tracking-[-1.2px]">3000</td>
                <td class="border border-[#b8d8bf] px-[2px] tracking-[-1.2px]">6</td>
                <td class="border border-[#b8d8bf] px-[2px] tracking-[-1.2px]">1</td>
                <td class="border border-[#b8d8bf] px-[2px] tracking-[-1.2px]">0</td>
              </tr>
              <tr class="h-[28px]">
                <td class="border border-[#b8d8bf] text-center bg-linear-to-b from-white to-[#e4e4e4]">2</td>
                <td class="border border-[#b8d8bf] border-r-[#111] px-[2px]">全部纵筋<span class="tracking-[-1.2px]">.2</span></td>
                <td class="border border-[#b8d8bf] border-l-[#111] px-[2px] tracking-[-1.2px]">12</td>
                <td class="border border-[#b8d8bf] text-center">虫</td>
                <td class="border border-[#b8d8bf] px-[2px] tracking-[-1.2px]">1</td>
                <td class="border border-[#b8d8bf]"><div class="ml-[23px] w-[150px] border-b-2 border-black text-center text-[#f00000] tracking-[-1.2px] pb-px">3000</div></td>
                <td class="border border-[#b8d8bf] px-[2px] tracking-[-1.2px]">3000-500+500</td>
                <td class="border border-[#b8d8bf] px-[2px] leading-[11px] whitespace-normal">层高-本层的露出长度+上层露出长度</td>
                <td class="border border-[#b8d8bf] px-[2px] tracking-[-1.2px]">3000</td>
                <td class="border border-[#b8d8bf] px-[2px] tracking-[-1.2px]">6</td>
                <td class="border border-[#b8d8bf] px-[2px] tracking-[-1.2px]">1</td>
                <td class="border border-[#b8d8bf] px-[2px] tracking-[-1.2px]">0</td>
              </tr>
              <tr class="h-[34px]">
                <td class="border border-[#b8d8bf] text-center bg-linear-to-b from-white to-[#e4e4e4]">3</td>
                <td class="border border-[#b8d8bf] border-r-[#111] px-[2px]">箍筋<span class="tracking-[-1.2px]">.1</span></td>
                <td class="border border-[#b8d8bf] border-l-[#111] px-[2px] tracking-[-1.2px]">8</td>
                <td class="border border-[#b8d8bf] text-center">中</td>
                <td class="border border-[#b8d8bf] px-[2px] tracking-[-1.2px]">195</td>
                <td class="border border-[#b8d8bf]"><div class="flex items-center pl-[55px] gap-[8px] tracking-[-1.2px]">160<svg class="w-[35px] h-[23px]" viewBox="0 0 35 23"><rect x="1" y="1" width="33" height="21" fill="none" stroke="#000" stroke-width="2"/><path d="M25 8l6-6M28 11l4-5" stroke="#000" stroke-width="2"/><text x="2" y="20" font-size="12" fill="#f00000" font-family="Liberation Mono" textLength="18" lengthAdjust="spacingAndGlyphs">810</text></svg></div></td>
                <td class="border border-[#b8d8bf] px-[2px] tracking-[-1.2px]">2*(810+160)+2*(11.9*d)</td>
                <td class="border border-[#b8d8bf]"></td>
                <td class="border border-[#b8d8bf] px-[2px] tracking-[-1.2px]">2130</td>
                <td class="border border-[#b8d8bf] px-[2px] tracking-[-1.2px]">16</td>
                <td class="border border-[#b8d8bf] px-[2px] tracking-[-1.2px]">0</td>
                <td class="border border-[#b8d8bf] px-[2px] tracking-[-1.2px]">0</td>
              </tr>
              <tr class="h-[34px]">
                <td class="border border-[#b8d8bf] text-center bg-linear-to-b from-white to-[#e4e4e4]">4</td>
                <td class="border border-[#b8d8bf] border-r-[#111] px-[2px]">箍筋<span class="tracking-[-1.2px]">.2</span></td>
                <td class="border border-[#b8d8bf] border-l-[#111] px-[2px] tracking-[-1.2px]">8</td>
                <td class="border border-[#b8d8bf] text-center">中</td>
                <td class="border border-[#b8d8bf] px-[2px] tracking-[-1.2px]">195</td>
                <td class="border border-[#b8d8bf]"><div class="flex items-center pl-[55px] gap-[8px] tracking-[-1.2px]">160<svg class="w-[35px] h-[23px]" viewBox="0 0 35 23"><rect x="1" y="1" width="33" height="21" fill="none" stroke="#000" stroke-width="2"/><path d="M25 8l6-6M28 11l4-5" stroke="#000" stroke-width="2"/><text x="2" y="20" font-size="12" fill="#f00000" font-family="Liberation Mono" textLength="18" lengthAdjust="spacingAndGlyphs">460</text></svg></div></td>
                <td class="border border-[#b8d8bf] px-[2px] tracking-[-1.2px]">2*(460+160)+2*(11.9*d)</td>
                <td class="border border-[#b8d8bf]"></td>
                <td class="border border-[#b8d8bf] px-[2px] tracking-[-1.2px]">1430</td>
                <td class="border border-[#b8d8bf] px-[2px] tracking-[-1.2px]">16</td>
                <td class="border border-[#b8d8bf] px-[2px] tracking-[-1.2px]">0</td>
                <td class="border border-[#b8d8bf] px-[2px] tracking-[-1.2px]">0</td>
              </tr>
              <tr class="h-[35px]">
                <td class="border border-[#b8d8bf] text-center bg-linear-to-b from-white to-[#e4e4e4]">5</td>
                <td class="border border-[#b8d8bf] border-r-[#111] px-[2px]">箍筋<span class="tracking-[-1.2px]">.3</span></td>
                <td class="border border-[#b8d8bf] border-l-[#111] px-[2px] tracking-[-1.2px]">8</td>
                <td class="border border-[#b8d8bf] text-center">中</td>
                <td class="border border-[#b8d8bf] px-[2px] tracking-[-1.2px]">195</td>
                <td class="border border-[#b8d8bf]"><div class="flex items-center pl-[55px] gap-[8px] tracking-[-1.2px]">160<svg class="w-[35px] h-[23px]" viewBox="0 0 35 23"><rect x="1" y="1" width="33" height="21" fill="none" stroke="#000" stroke-width="2"/><path d="M25 8l6-6M28 11l4-5" stroke="#000" stroke-width="2"/><text x="2" y="20" font-size="12" fill="#f00000" font-family="Liberation Mono" textLength="18" lengthAdjust="spacingAndGlyphs">245</text></svg></div></td>
                <td class="border border-[#b8d8bf] px-[2px] tracking-[-1.2px]">2*(245+160)+2*(11.9*d)</td>
                <td class="border border-[#b8d8bf]"></td>
                <td class="border border-[#b8d8bf] px-[2px] tracking-[-1.2px]">1000</td>
                <td class="border border-[#b8d8bf] px-[2px] tracking-[-1.2px]">16</td>
                <td class="border border-[#b8d8bf] px-[2px] tracking-[-1.2px]">0</td>
                <td class="border border-[#b8d8bf] px-[2px] tracking-[-1.2px]">0</td>
              </tr>
              <tr class="h-[19px] bg-white">
                <td class="border border-[#c4c4c4] text-center bg-linear-to-b from-white to-[#e4e4e4]">6</td>
                <td class="border border-[#c4c4c4] border-r-[#111]"></td>
                <td class="border border-[#c4c4c4] border-l-[#111]"></td>
                <td class="border border-[#c4c4c4]"></td><td class="border border-[#c4c4c4]"></td><td class="border border-[#c4c4c4]"></td><td class="border border-[#c4c4c4]"></td><td class="border border-[#c4c4c4]"></td><td class="border border-[#c4c4c4]"></td><td class="border border-[#c4c4c4]"></td><td class="border border-[#c4c4c4]"></td><td class="border border-[#c4c4c4]"></td>
              </tr>
            </tbody>
          </table>
          <!-- horizontal scrollbar -->
          <div class="h-[15px] mb-[2px] bg-[#f0f0f0] flex items-center">
            <span class="w-[19px] text-center text-[#555] text-[12px]">‹</span>
            <span class="w-[502px] h-full bg-[#cacaca]"></span>
            <span class="ml-auto w-[14px] text-center text-[#555] text-[12px]">›</span>
          </div>
        </div>
      </div>
    </div>
  </div>

  <!-- property editor -->
  <div class="flex-1 ml-[3px] flex flex-col pt-[3px] pb-[6px]">
    <div class="h-[15px] flex items-center justify-between border-t border-b border-[#a0a0a0] bg-[#f5f5f5] pr-[4px] text-[12px]">
      属性编辑器
      <span class="flex items-center gap-[6px]">
        <svg class="w-[10px] h-[10px]" viewBox="0 0 10 10"><path d="M3 1h4v5h2v1H6v3H4V7H1V6h2z" fill="#111"/></svg>
        <svg class="w-[9px] h-[9px]" viewBox="0 0 9 9"><path d="M1 1l7 7M8 1L1 8" stroke="#222"/></svg>
      </span>
    </div>
    <div class="flex-1 mt-px mr-[2px] bg-white border border-[#aaa] pt-px">
      <table class="w-[221px] table-fixed border-collapse font-['Liberation_Mono','Noto_Sans_CJK_SC',monospace] text-[12px] [&_td]:pt-[2px] [&_th]:pt-px">
        <colgroup><col class="w-[21px]"><col class="w-[121px]"><col class="w-[79px]"></colgroup>
        <thead>
          <tr class="h-[22px] bg-linear-to-b from-white to-[#ececec]">
            <th class="border border-[#c4c4c4] font-normal"></th>
            <th class="border border-[#c4c4c4] font-normal">属性名称</th>
            <th class="border border-[#c4c4c4] font-normal text-[#7a0f6f] bg-linear-to-b from-[#fde3b4] to-[#f0b863]">属性值</th>
          </tr>
        </thead>
        <tbody>
          <tr class="h-[19px]"><td class="border border-[#c4c4c4] text-center text-[#7a0f6f] tracking-[-1.2px] bg-[#fbd089]">1</td><td class="border border-[#c4c4c4] pl-[20px] bg-[#0078d7] text-white">名称</td><td class="border border-[#c4c4c4] px-[2px] bg-[#d8e9f8] tracking-[-1.2px]">GBZ18</td></tr>
          <tr class="h-[19px]"><td class="border border-[#c4c4c4] text-center tracking-[-1.2px] bg-linear-to-b from-white to-[#e4e4e4]">2</td><td class="border border-[#c4c4c4] pl-[20px] text-[#0000e0]">类别</td><td class="border border-[#c4c4c4] px-[2px]">暗柱</td></tr>
          <tr class="h-[19px]"><td class="border border-[#c4c4c4] text-center tracking-[-1.2px] bg-linear-to-b from-white to-[#e4e4e4]">3</td><td class="border border-[#c4c4c4] pl-[20px] text-[#0000e0]">截面编辑</td><td class="border border-[#c4c4c4] px-[2px]">是</td></tr>
          <tr class="h-[19px]"><td class="border border-[#c4c4c4] text-center tracking-[-1.2px] bg-linear-to-b from-white to-[#e4e4e4]">4</td><td class="border border-[#c4c4c4] pl-[20px]">截面形状</td><td class="border border-[#c4c4c4] px-[2px]"><span class="tracking-[-1.2px]">L-d</span>形</td></tr>
          <tr class="h-[19px]"><td class="border border-[#c4c4c4] text-center tracking-[-1.2px] bg-linear-to-b from-white to-[#e4e4e4]">5</td><td class="border border-[#c4c4c4] pl-[20px] text-[#8c8c8c]">截面宽<span class="tracking-[-1.2px]">(B</span>边<span class="tracking-[-1.2px]">)(mm)</span></td><td class="border border-[#c4c4c4] px-[2px] text-[#8c8c8c] tracking-[-1.2px]">850</td></tr>
          <tr class="h-[19px]"><td class="border border-[#c4c4c4] text-center tracking-[-1.2px] bg-linear-to-b from-white to-[#e4e4e4]">6</td><td class="border border-[#c4c4c4] pl-[20px] text-[#8c8c8c]">截面高<span class="tracking-[-1.2px]">(H</span>边<span class="tracking-[-1.2px]">)(mm)</span></td><td class="border border-[#c4c4c4] px-[2px] text-[#8c8c8c] tracking-[-1.2px]">500</td></tr>
          <tr class="h-[19px]"><td class="border border-[#c4c4c4] text-center tracking-[-1.2px] bg-linear-to-b from-white to-[#e4e4e4]">7</td><td class="border border-[#c4c4c4] pl-[20px] text-[#8c8c8c]">全部纵筋</td><td class="border border-[#c4c4c4] px-[2px] text-[#8c8c8c]"><span class="tracking-[-1.2px]">12</span><span class="text-[#222] mx-[2px]">虫</span><span class="tracking-[-1.2px]">12</span></td></tr>
          <tr class="h-[19px]"><td class="border border-[#c4c4c4] text-center tracking-[-1.2px] bg-linear-to-b from-white to-[#e4e4e4]">8</td><td class="border border-[#c4c4c4] pl-[20px] text-[#0000e0]">其它箍筋</td><td class="border border-[#c4c4c4]"></td></tr>
          <tr class="h-[19px]"><td class="border border-[#c4c4c4] text-center tracking-[-1.2px] bg-linear-to-b from-white to-[#e4e4e4]">9</td><td class="border border-[#c4c4c4] pl-[20px]">备注</td><td class="border border-[#c4c4c4]"></td></tr>
          <tr class="h-[19px]"><td class="border border-[#c4c4c4] text-center tracking-[-1.2px] bg-linear-to-b from-white to-[#e4e4e4]">10</td><td class="border border-[#c4c4c4] pl-[4px] text-[#8c8c8c]"><span class="inline-flex items-center gap-[5px]"><span class="w-[11px] h-[11px] border border-[#aaa] flex items-center justify-center text-[#222] text-[11px]">+</span>其它属性</span></td><td class="border border-[#c4c4c4]"></td></tr>
          <tr class="h-[19px]"><td class="border border-[#c4c4c4] text-center tracking-[-1.2px] bg-linear-to-b from-white to-[#e4e4e4]">22</td><td class="border border-[#c4c4c4] pl-[4px] text-[#8c8c8c]"><span class="inline-flex items-center gap-[5px]"><span class="w-[11px] h-[11px] border border-[#aaa] flex items-center justify-center text-[#222] text-[11px]">+</span>锚固搭接</span></td><td class="border border-[#c4c4c4]"></td></tr>
          <tr class="h-[19px]"><td class="border border-[#c4c4c4] text-center tracking-[-1.2px] bg-linear-to-b from-white to-[#e4e4e4]">37</td><td class="border border-[#c4c4c4] pl-[4px] text-[#8c8c8c]"><span class="inline-flex items-center gap-[5px]"><span class="w-[11px] h-[11px] border border-[#aaa] flex items-center justify-center text-[#222] text-[11px]">+</span>显示样式</span></td><td class="border border-[#c4c4c4]"></td></tr>
        </tbody>
      </table>
    </div>
  </div>
</div>

<!-- status bar -->
<div class="h-[20px] flex items-stretch font-['Liberation_Mono','Noto_Sans_CJK_SC',monospace] text-[12px] bg-[#f5f5f5]">
  <div class="w-[146px] flex items-center tracking-[-1.2px] border-r border-[#ccc]">X=5683 Y=65305</div>
  <div class="w-[80px] flex items-center pl-[4px] border-r border-[#ccc]">层高<span class="tracking-[-1.2px]">:3m</span></div>
  <div class="w-[100px] flex items-center pl-[2px] border-r border-[#ccc]">底标高<span class="tracking-[-1.2px]">:11.95m</span></div>
  <div class="w-[51px] flex items-center pl-[2px] border-r border-[#ccc] tracking-[-1.2px]">1(2)</div>
  <div class="w-[907px] flex items-center pl-[2px] border-r border-[#ccc]">按鼠标左键指定第一个角点，或拾取构件图元</div>
  <div class="flex items-center pl-[3px] tracking-[-1.2px]">750.7 FPS</div>
</div>

<!-- section editor dialog, floats over the drawing -->
<div class="absolute left-[796px] top-[395px] w-[541px] h-[480px] bg-[#f0f0f0] border border-[#1c7fc4] flex flex-col">
  <div class="h-[31px] shrink-0 bg-white flex items-center pl-[8px] text-[12px]">截面编辑</div>
  <div class="h-[26px] mt-[6px] mx-[5px] shrink-0 bg-linear-to-b from-[#f8f8f8] to-[#e9e9e9] flex items-center pl-[3px]">
    <span class="w-[3px] h-4 mr-[5px] border-l-2 border-dotted border-[#999]"></span>
    <span>布角筋</span><span class="ml-[10px]">布边筋</span><span class="ml-[10px]">特殊布筋</span><span class="ml-[10px]">对齐钢筋</span><span class="ml-[10px]">画箍筋</span>
    <span class="w-px h-4 mx-[8px] bg-[#bbb]"></span>
    <span>修改纵筋</span><span class="ml-[10px]">修改箍筋</span><span class="ml-[10px]">编辑弯钩</span><span class="ml-[10px]">恢复</span>
    <svg class="w-[9px] h-[7px] ml-auto mr-[3px] -mt-3"><use href="#more"/></svg>
  </div>
  <div class="h-[26px] mt-[2px] ml-[5px] w-[195px] shrink-0 bg-[#f5f5f5] flex items-center pl-[3px] text-[#8a8a8a]">
    <span class="w-[3px] h-4 mr-[5px] border-l-2 border-dotted border-[#999]"></span>钢筋信息
    <span class="ml-[2px] w-[133px] h-[23px] border border-[#888] bg-[#f0f0f0] flex items-center justify-end pr-[6px]"><svg class="w-[6px] h-[4px] opacity-60"><use href="#tri"/></svg></span>
  </div>
  <div class="mt-[2px] ml-[5px] w-[529px] h-[358px] shrink-0 border-2 border-[#ff0000]">
    <svg class="block w-[525px] h-[354px] bg-black" viewBox="804 491 525 354" font-family="Liberation Mono">
      <g stroke="#3c3c3c" stroke-dasharray="8 4" fill="none">
        <path d="M819 509V847M854 509V847M890 509V847M925 509V847M960 509V847M1032 509V847M1067 509V847M1103 509V847M1138 509V847M1175 509V847"/>
        <path d="M814 514H1180M814 550H1180M814 586H1180M814 622H1180M814 657H1180M814 727H1180M814 763H1180M814 799H1180M814 834H1180"/>
      </g>
      <path d="M996 509V847M810 692H1180" stroke="#666" stroke-dasharray="8 4" fill="none"/>
      <g fill="#444" font-size="12" text-anchor="middle"><text x="1000" y="521">500</text><text x="823" y="699">-500</text><text x="999" y="699">0</text><text x="1178" y="699">500</text></g>
      <path d="M845 603H1148V674H916V781H845Z" fill="none" stroke="#fff" stroke-width="2"/>
      <g fill="none" stroke="#ff0000" stroke-width="3" stroke-linejoin="round">
        <rect x="854" y="612" width="285" height="54" rx="3"/>
        <path d="M907 612V773H857q-3 0-3-3V666"/>
        <path d="M978 612V666M1062 612V666"/>
        <path d="M855 615L878 642M860 613L883 636M979 618L1002 642M984 613L1007 636"/>
      </g>
      <g fill="none" stroke="#ffe600"><circle cx="857" cy="615" r="1.800"/><circle cx="904" cy="615" r="1.800"/><circle cx="857" cy="662" r="1.800"/><circle cx="904" cy="662" r="1.800"/><circle cx="1135" cy="615" r="1.800"/><circle cx="1135" cy="662" r="1.800"/><circle cx="857" cy="769" r="1.800"/><circle cx="904" cy="769" r="1.800"/></g>
      <g fill="none" stroke="#ff20ff"><circle cx="981" cy="615" r="1.800"/><circle cx="981" cy="662" r="1.800"/><circle cx="1058" cy="615" r="1.800"/><circle cx="1058" cy="662" r="1.800"/></g>
      <g stroke="#00f000" fill="none">
        <path d="M838 795.500H1156M845 785V806M916 785V806M1148 785V806M838 805l14-19M909 805l14-19M1141 805l14-19"/>
        <path d="M1162.500 595V782M1152 603H1172M1152 674H1172M1152 781H1172M1154 596l18 18M1154 668l18 18M1154 774l18 18"/>
      </g>
      <path d="M1149 602L1185 566" stroke="#fff" fill="none"/>
      <g fill="#fff" font-size="14" text-anchor="middle"><text x="1176" y="644">200</text><text x="1176" y="733">300</text><text x="880" y="815">200</text><text x="1032" y="815">650</text></g>
      <g fill="#fff" font-size="14" font-family="Noto Sans CJK SC"><text x="1186" y="557">全部纵筋</text><text x="1186" y="571">箍筋</text></g>
      <g fill="#00f000" font-size="13.500" font-family="Liberation Mono"><text x="1249" y="557">12C12</text><text x="1249" y="571">A8@200</text></g>
    </svg>
  </div>
  <div class="h-[20px] mt-[6px] flex font-['Liberation_Mono','Noto_Sans_CJK_SC',monospace] text-[12px] text-[#222]">
    <div class="w-[148px] flex items-center pl-[8px] tracking-[-1.2px] border border-[#d8d8d8] bg-[#f5f5f5]">(X: 69 Y: 557)</div>
    <div class="flex-1 ml-[2px] border border-[#d8d8d8] bg-[#f5f5f5] flex items-end justify-end">
      <svg class="w-[10px] h-[10px] mb-px mr-px" viewBox="0 0 10 10"><path d="M8 1h1v1H8zM5 4h1v1H5zM8 4h1v1H8zM2 7h1v1H2zM5 7h1v1H5zM8 7h1v1H8z" fill="#aaa"/></svg>
    </div>
  </div>
</div>

<!-- hand-drawn red ring over the table -->
<svg class="absolute left-[968px] top-[1024px] w-[90px] h-[250px] pointer-events-none" viewBox="0 0 90 250"><ellipse cx="45" cy="125" rx="42" ry="121" fill="none" stroke="#f01810" stroke-width="3"/></svg>

</body>
</html>
